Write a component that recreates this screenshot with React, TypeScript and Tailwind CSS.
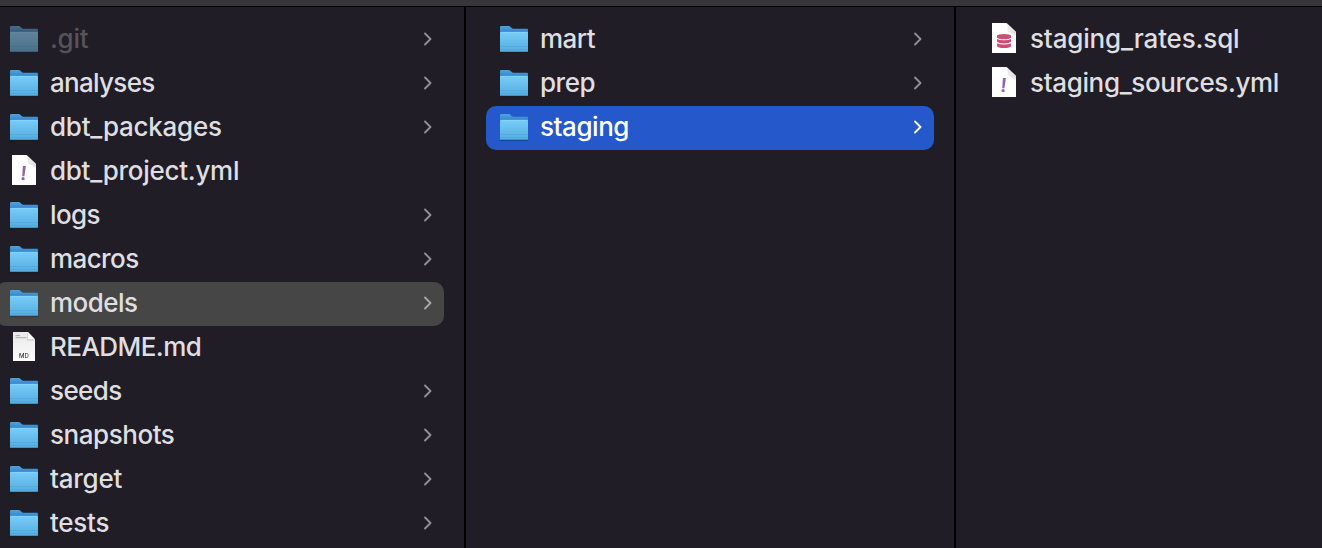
type Kind = "folder" | "yml" | "sql" | "md";
type Entry = {
  name: string;
  kind: Kind;
  tracking: string;
  state?: "dimmed" | "path" | "active";
};

const root: Entry[] = [
  { name: ".git", kind: "folder", tracking: "tracking-[-0.3px]", state: "dimmed" },
  { name: "analyses", kind: "folder", tracking: "tracking-[-0.7px]" },
  { name: "dbt_packages", kind: "folder", tracking: "tracking-[-0.25px]" },
  { name: "dbt_project.yml", kind: "yml", tracking: "tracking-[-0.28px]" },
  { name: "logs", kind: "folder", tracking: "tracking-[-0.6px]" },
  { name: "macros", kind: "folder", tracking: "tracking-[-0.6px]" },
  { name: "models", kind: "folder", tracking: "tracking-[-0.55px]", state: "path" },
  { name: "README.md", kind: "md", tracking: "tracking-[-0.55px]" },
  { name: "seeds", kind: "folder", tracking: "tracking-[-0.6px]" },
  { name: "snapshots", kind: "folder", tracking: "tracking-[-0.45px]" },
  { name: "target", kind: "folder", tracking: "tracking-[-0.25px]" },
  { name: "tests", kind: "folder", tracking: "tracking-[-0.25px]" },
];

const models: Entry[] = [
  { name: "mart", kind: "folder", tracking: "tracking-[-0.5px]" },
  { name: "prep", kind: "folder", tracking: "tracking-[-0.5px]" },
  { name: "staging", kind: "folder", tracking: "tracking-[-0.45px]", state: "active" },
];

const staging: Entry[] = [
  { name: "staging_rates.sql", kind: "sql", tracking: "tracking-[-0.16px]" },
  { name: "staging_sources.yml", kind: "yml", tracking: "tracking-[-0.36px]" },
];

function FolderIcon() {
  return (
    <g>
      <path d="M2 34.6H30" stroke="#000" strokeOpacity=".3" />
      <path d="M2 9.2Q2 8 3.2 8H10.6Q11.6 8 12.4 8.8L13.6 10Q14.3 10.7 15.4 10.7H29Q30 10.7 30 11.8V20H2Z" fill="url(#tab)" />
      <path d="M2 15Q2 14 3 14H29Q30 14 30 15V33Q30 34 29 34H3Q2 34 2 33Z" fill="url(#front)" />
      <path d="M2.5 14.3H29.5" stroke="#8bd5fb" strokeWidth=".7" />
      <path d="M2 28.5H30M2 31.5H30" stroke="#4198ce" strokeOpacity=".4" strokeWidth=".8" />
      <path d="M2.6 33.6H29.4" stroke="#3686bd" strokeWidth=".8" />
    </g>
  );
}

function FileIcon({ kind }: { kind: Kind }) {
  if (kind === "folder") return <FolderIcon />;
  if (kind === "md")
    return (
      <g>
        <path d="M5 6H20L27 13.5V35H5Z" fill="url(#paper)" />
        <path d="M7.5 9.6H12M7.5 11.7H18.5" stroke="#aaa" strokeWidth="1" />
        <path d="M19 7V14.5H27Z" fill="#aaa" fillOpacity=".5" />
        <path d="M19.8 6V13.2H27Z" fill="#fafafa" />
        <text x="16" y="31.8" textAnchor="middle" fill="#333" opacity=".99" className="font-['Inter'] text-[6px] font-medium">
          MD
        </text>
      </g>
    );
  return (
    <g>
      <path d="M4 5H18.5L28 14V35H4Z" fill="#fff" />
      <path d="M18.5 5C20 7.5 20 10.5 19.4 13C22 12.3 25.5 12.6 28 14Z" fill="#e9e9e9" />
      <path d="M19.4 13C22 12.3 25.5 12.6 28 14L27.6 18Z" fill="url(#fold)" />
      {kind === "yml" ? (
        <g fill="#8f63b3">
          <path d="M14.9 16H17.9L16.4 26.3H14.2Z" />
          <circle cx="15.1" cy="28.7" r="1.6" />
        </g>
      ) : (
        <g fill="#cc4e74">
          <path d="M9 17.6Q10 16 16 16T23 17.6V19.2Q22 21.2 16 21.2T9 19.2Z" />
          <path d="M9 20.9Q11 22.3 16 22.3T23 20.9V23.6Q22 25.5 16 25.5T9 23.6Z" />
          <path d="M9 25.2Q11 26.6 16 26.6T23 25.2V28Q22 30 16 30T9 28Z" />
        </g>
      )}
    </g>
  );
}

function Row({ entry }: { entry: Entry }) {
  const { name, kind, tracking, state } = entry;
  const background =
    state === "active" ? "bg-[#2458cb]" : state === "path" ? "bg-[#464646]" : "";
  const text =
    state === "active" ? "text-white" : state === "dimmed" ? "text-[#575459]" : "text-[#dfdee0]";
  const chevron = state === "active" ? "stroke-white" : state === "path" ? "stroke-[#a8a8a8]" : "stroke-[#929094]";
  return (
    <li className={`flex h-11 items-center rounded-[10px] pr-3 pl-3 ${background}`}>
      <svg viewBox="0 0 32 44" className={`h-11 w-8 shrink-0 ${state === "dimmed" ? "opacity-60 saturate-75" : ""}`}>
        <FileIcon kind={kind} />
      </svg>
      <span className={`ml-2.5 grow pb-0.5 text-[26px] leading-[42px] font-[450] whitespace-nowrap ${tracking} ${text}`}>{name}</span>
      {kind === "folder" && (
        <svg viewBox="0 0 8 14" className={`mb-0.5 h-3.5 w-2 shrink-0 fill-none ${chevron}`}>
          <path d="M1 1.5L6.5 7L1 12.5" strokeWidth="1.8" strokeLinecap="round" strokeLinejoin="round" />
        </svg>
      )}
    </li>
  );
}

function Column({ entries, className }: { entries: Entry[]; className: string }) {
  return (
    <ul className={`shrink-0 overflow-hidden pt-[11px] ${className}`}>
      {entries.map((entry) => (
        <Row key={entry.name} entry={entry} />
      ))}
    </ul>
  );
}

export default function App() {
  return (
    <main className="flex h-[548px] w-[1322px] flex-col overflow-hidden bg-[#211d26] font-['Inter',sans-serif]">
      <svg className="absolute size-0" aria-hidden="true">
        <defs>
          <linearGradient id="tab" x1="0" y1="0" x2="0" y2="1">
            <stop offset="0" stopColor="#4ba4e0" />
            <stop offset=".5" stopColor="#3686cb" />
          </linearGradient>
          <linearGradient id="front" x1="0" y1="0" x2="0" y2="1">
            <stop offset="0" stopColor="#78ccf8" />
            <stop offset="1" stopColor="#54addf" />
          </linearGradient>
          <linearGradient id="fold" x1="0" y1="1" x2="1" y2="0">
            <stop offset="0" stopColor="#fff" />
            <stop offset="1" stopColor="#d4d4d4" />
          </linearGradient>
          <linearGradient id="paper" x1="0" y1="0" x2="0" y2="1">
            <stop offset="0" stopColor="#e9e9e9" />
            <stop offset="1" stopColor="#fcfcfc" />
          </linearGradient>
        </defs>
      </svg>
      <header className="h-[7px] shrink-0 border-b border-black bg-[#37353a]" />
      <div className="flex min-h-0 grow">
        <Column entries={root} className="-ml-1 w-[470px] border-r-2 border-black pr-5" />
        <Column entries={models} className="w-[490px] border-r-2 border-black px-5" />
        <Column entries={staging} className="w-[366px] px-5" />
      </div>
    </main>
  );
}
